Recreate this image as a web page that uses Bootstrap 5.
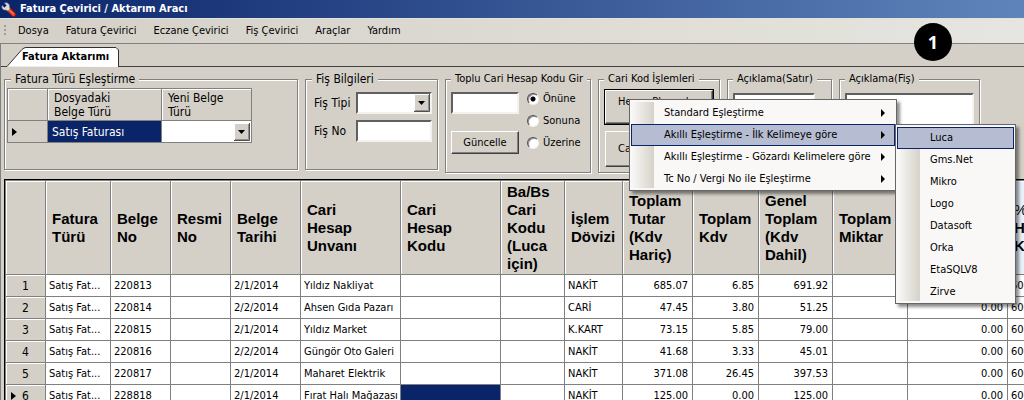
<!DOCTYPE html>
<html lang="tr">
<head>
<meta charset="utf-8">
<meta name="viewport" content="width=device-width, initial-scale=1">
<title>Fatura Çevirici / Aktarım Aracı</title>
<link href="https://cdn.jsdelivr.net/npm/bootstrap@5.3.0/dist/css/bootstrap.min.css" rel="stylesheet">
<style>
  :root { --face: #d4d0c8; --line: #808080; --navy: #0a246a; }
  body { background: var(--face); color: #000; font: 11px/14px "DejaVu Sans Condensed", "DejaVu Sans", sans-serif; }
  label, button, input, select, textarea { font: inherit; color: #000; }

  .titlebar { height: 18px; background: linear-gradient(90deg, var(--navy), #5f84bb); color: #fff; font-weight: 700; }
  .menubar { height: 25px; background: linear-gradient(90deg, #d4d0c8, #e6e5df); border-top: 1px solid #e4e1da; }
  .menubar a { color: #000; text-decoration: none; }
  .menu-links { gap: 17px; }
  .grip { width: 2px; height: 12px; background: repeating-linear-gradient(#a09d96 0 2px, transparent 2px 4px); }
  .workspace { border-top: 1px solid var(--line); border-left: 1px solid var(--line); }

  .tabstrip { height: 23px; }
  .tabstrip::before { content: ""; width: 6px; border-bottom: 1px solid #404040; }
  .tabstrip::after { content: ""; flex: 1; border-bottom: 1px solid #404040; }
  .page-tab { width: 112px; height: 20px; border: 0; background: none; padding: 0 0 0 15px; font-weight: 700; text-align: left; }
  .page-tab svg { position: absolute; inset: 0; z-index: -1; }

  .groups { gap: 7px; padding: 5px 0 6px 3px; }
  .group { border: 1px solid var(--line); box-shadow: 1px 1px 0 #fff, inset 1px 1px 0 #fff; }
  .group legend { float: none; width: auto; margin: 0 0 0 5px; padding: 0 4px; font-size: 11px; line-height: 14px; background: var(--face); white-space: nowrap; }
  .group legend.lg { margin-left: 6px; }
  .g-types { width: 294px; height: 98px; }
  .g-slip { width: 133px; height: 98px; }
  .g-bulk { width: 146px; height: 101px; }
  .g-code { width: 122px; height: 101px; }
  .g-line { width: 105px; height: 101px; }
  .g-note { width: 141px; height: 101px; }
  .lg { font-size: 12px !important; }

  .field { background: #fff; border: 2px solid; border-color: #606060 #f4f2ee #f4f2ee #606060; border-radius: 0; width: 100%; height: 22px; padding: 0 2px; display: block; resize: none; outline: 0; }
  .pick { appearance: none; border-radius: 0; background: #fff url("data:image/svg+xml,%3Csvg xmlns='http://www.w3.org/2000/svg' width='16' height='18'%3E%3Cpath fill='%23d4d0c8' d='M0 0h16v18H0z'/%3E%3Cpath fill='none' stroke='%23fff' d='M.5 17V.5H15'/%3E%3Cpath fill='none' stroke='%23505050' d='M15.5 0v17.5H0'/%3E%3Cpath fill='none' stroke='%23909090' d='M14.5 1v15.500H1'/%3E%3Cpath d='M4 7h7L7.500 11z'/%3E%3C/svg%3E") right center no-repeat; }
  .push { background: var(--face); border: 1px solid; border-color: #fff #404040 #404040 #fff; border-radius: 0; box-shadow: inset -1px -1px 0 #808080; padding: 0; white-space: nowrap; overflow: hidden; }
  .push-main { outline: 1px solid #000; }
  .dot { appearance: none; width: 12px; height: 12px; margin: 0; border-radius: 50%; background: #fff; border: 1px solid; border-color: #505050 #f4f2ee #f4f2ee #505050; box-shadow: inset 1px 1px 0 #909090; }
  .dot:checked { background: radial-gradient(circle, #000 2px, #fff 3px); }

  .match { width: 245px; margin: 2px; border-collapse: collapse; font-size: 12px; table-layout: fixed; }
  .match th, .match td { border: 1px solid var(--line); font-weight: 400; padding: 0; }
  .match th { height: 32px; padding: 0 6px; box-shadow: inset 1px 1px 0 #fff; white-space: nowrap; }
  .match td { height: 22px; }
  .match .pick { border: 1px solid #fff; height: 20px; width: 100%; display: block; }
  .chosen { background: var(--navy); color: #fff; }

  .popup { position: absolute; z-index: 5; background: #f9f8f7 linear-gradient(90deg, #f9f8f7, #d6d2c9) 2px 2px / 22px calc(100% - 4px) no-repeat; border: 1px solid #666; padding: 2px 1px 0; box-shadow: 3px 3px 3px rgba(0, 0, 0, .45); margin: 0; list-style: none; }
  .popup a { display: flex; align-items: center; height: 22px; padding: 0 9px 0 32px; border: 1px solid transparent; color: #000; text-decoration: none; white-space: nowrap; }
  .popup a.active { background: #b6bdd2; border-color: var(--navy); }
  .popup-main { left: 30px; top: 13px; width: 268px; }
  .popup-sub { left: 100%; top: 0; width: 121px; }
  .tri { margin-left: auto; border: solid transparent; border-width: 4px 0 4px 4px; border-left-color: #000; }

  .sheet { border-top: 1px solid #000; border-left: 1px solid #000; margin-left: 3px; }
  .invoices { width: 1101px; table-layout: fixed; border-collapse: separate; border-spacing: 0; border-top: 1px solid var(--line); border-left: 1px solid var(--line); }
  .invoices th, .invoices td { border-right: 1px solid var(--line); border-bottom: 1px solid var(--line); padding: 0 3px; white-space: nowrap; overflow: hidden; }
  .invoices thead th { height: 94px; padding: 0 0 0 6px; background: var(--face); box-shadow: inset 1px 1px 0 #fff; font: 700 15px/18px "Liberation Sans", Arial, sans-serif; vertical-align: middle; }
  .invoices tbody tr { height: 22px; }
  .invoices tbody td { background: #fff; }
  .invoices tbody th { background: var(--face); box-shadow: inset 1px 1px 0 #fff; font: 400 12px/14px "DejaVu Sans Condensed", sans-serif; text-align: center; position: relative; }
  .invoices td.chosen { background: var(--navy); }
  .invoices .num { text-align: right; padding-right: 4px; }
  .invoices thead th.hot { background: #e9f2fb; }
  .row-mark { display: inline-block; border: solid transparent; border-width: 4px 0 4px 5px; border-left-color: #000; }
  tbody th .row-mark { position: absolute; left: 5px; top: 7px; }

  .step { position: absolute; z-index: 9; top: 23px; right: 72px; width: 38px; height: 38px; border-radius: 50%; background: #000; color: #fff; font: 700 18px/38px "Open Sans", sans-serif; text-align: center; }
</style>
</head>
<body>
<div class="vh-100 overflow-hidden position-relative">
  <header class="titlebar d-flex align-items-center">
    <svg class="ms-0 me-1" width="16" height="17" viewBox="0 0 16 17" aria-hidden="true">
      <path d="M8.500 8 14 13.500" stroke="#7a1208" stroke-width="5" stroke-linecap="round"/>
      <path d="M8 8 13.500 13.500" stroke="#e8402a" stroke-width="3.500" stroke-linecap="round"/>
      <path d="M8 7.500 13.500 13" stroke="#ff9a80" stroke-width="1"/>
      <path d="M2 4.500 4.500 6.500 6.500 4.500 4.500 2C7 1 10 3 9.500 6L10 8 8 10 6 9C3 9.500 1.200 7 2 4.500Z" fill="#dcdcdc" stroke="#707070" stroke-width=".6"/>
    </svg>
    <span>Fatura Çevirici / Aktarım Aracı</span>
  </header>

  <nav class="menubar d-flex align-items-center">
    <span class="grip ms-1 me-2"></span>
    <div class="menu-links d-flex ms-1">
      <a href="#">Dosya</a><a href="#">Fatura Çevirici</a><a href="#">Eczane Çevirici</a><a href="#">Fiş Çevirici</a><a href="#">Araçlar</a><a href="#">Yardım</a>
    </div>
  </nav>

  <main class="workspace">
    <div class="tabstrip d-flex align-items-stretch">
      <button type="button" class="page-tab position-relative z-0 align-self-end">
        <svg width="112" height="20" viewBox="0 0 112 20" aria-hidden="true"><path d="M0 19.500 15 2.500Q17 .5 19 .5H109L111.500 3V20" fill="#fff" stroke="#303030"/></svg>Fatura Aktarımı</button>
    </div>

    <form class="groups d-flex align-items-start">
      <fieldset class="group g-types flex-shrink-0">
        <legend class="lg">Fatura Türü Eşleştirme</legend>
        <table class="match">
          <colgroup><col style="width:40px"><col style="width:114px"><col></colgroup>
          <thead><tr><th></th><th scope="col">Dosyadaki<br>Belge Türü</th><th scope="col">Yeni Belge<br>Türü</th></tr></thead>
          <tbody><tr><td class="ps-1"><span class="row-mark d-block"></span></td><td class="chosen ps-1">Satış Faturası</td>
            <td class="bg-white"><select class="pick" aria-label="Yeni Belge Türü"><option></option></select></td></tr></tbody>
        </table>
      </fieldset>

      <fieldset class="group g-slip flex-shrink-0">
        <legend class="lg">Fiş Bilgileri</legend>
        <div class="d-grid align-items-center lg" style="grid-template-columns:42px 76px;gap:6px 0;padding:6px 0 0 8px">
          <label for="tip">Fiş Tipi</label><select id="tip" class="field pick"><option></option></select>
          <label for="no">Fiş No</label><input id="no" class="field">
        </div>
      </fieldset>

      <fieldset class="group g-bulk flex-shrink-0">
        <legend>Toplu Cari Hesap Kodu Gir</legend>
        <div class="d-flex gap-2" style="padding:6px 0 0 5px">
          <div class="d-flex flex-column justify-content-between" style="width:68px;height:62px">
            <input class="field" aria-label="Cari hesap kodu">
            <button type="button" class="push" style="height:23px">Güncelle</button>
          </div>
          <div class="d-flex flex-column">
            <label class="d-flex align-items-center gap-1 mb-1"><input type="radio" name="yer" class="dot" checked>Önüne</label>
            <label class="d-flex align-items-center gap-1 mb-2 mt-1"><input type="radio" name="yer" class="dot">Sonuna</label>
            <label class="d-flex align-items-center gap-1"><input type="radio" name="yer" class="dot">Üzerine</label>
          </div>
        </div>
      </fieldset>

      <fieldset class="group g-code flex-shrink-0 position-relative">
        <legend>Cari Kod İşlemleri</legend>
        <div class="d-grid" style="gap:7px;padding:4px 6px 0 6px">
          <button type="button" class="push push-main text-start" style="height:34px;padding:0 0 10px 12px">Hesap Planından</button>
          <button type="button" class="push text-start" style="height:36px;padding-left:12px">Cari Kart</button>
        </div>
        <ul class="popup popup-main">
          <li><a href="#">Standard Eşleştirme<i class="tri"></i></a></li>
          <li class="position-relative"><a href="#" class="active">Akıllı Eşleştirme - İlk Kelimeye göre<i class="tri"></i></a>
            <ul class="popup popup-sub">
              <li><a href="#" class="active">Luca</a></li>
              <li><a href="#">Gms.Net</a></li>
              <li><a href="#">Mikro</a></li>
              <li><a href="#">Logo</a></li>
              <li><a href="#">Datasoft</a></li>
              <li><a href="#">Orka</a></li>
              <li><a href="#">EtaSQLV8</a></li>
              <li><a href="#">Zirve</a></li>
            </ul>
          </li>
          <li><a href="#">Akıllı Eşleştirme - Gözardı Kelimelere göre<i class="tri"></i></a></li>
          <li><a href="#">Tc No / Vergi No ile Eşleştirme<i class="tri"></i></a></li>
        </ul>
      </fieldset>

      <fieldset class="group g-line flex-shrink-0">
        <legend>Açıklama(Satır)</legend>
        <div style="padding:7px 16px 0 5px"><textarea class="field" style="height:60px" aria-label="Açıklama (Satır)"></textarea></div>
      </fieldset>

      <fieldset class="group g-note flex-shrink-0">
        <legend>Açıklama(Fiş)</legend>
        <div style="padding:7px 5px 0 5px"><textarea class="field" style="height:60px" aria-label="Açıklama (Fiş)"></textarea></div>
      </fieldset>
    </form>

    <div class="sheet overflow-hidden">
      <table class="invoices">
        <colgroup><col style="width:40px"><col style="width:65px"><col style="width:60px"><col style="width:60px"><col style="width:70px"><col style="width:100px"><col style="width:100px"><col style="width:64px"><col style="width:58px"><col style="width:70px"><col style="width:66px"><col style="width:74px"><col style="width:75px"><col style="width:100px"><col></colgroup>
        <thead><tr><th></th><th scope="col">Fatura<br>Türü</th><th scope="col">Belge<br>No</th><th scope="col">Resmi<br>No</th><th scope="col">Belge<br>Tarihi</th><th scope="col">Cari<br>Hesap<br>Unvanı</th><th scope="col">Cari<br>Hesap<br>Kodu</th><th scope="col">Ba/Bs<br>Cari<br>Kodu<br>(Luca<br>için)</th><th scope="col">İşlem<br>Dövizi</th><th scope="col">Toplam<br>Tutar<br>(Kdv<br>Hariç)</th><th scope="col">Toplam<br>Kdv</th><th scope="col">Genel<br>Toplam<br>(Kdv<br>Dahil)</th><th scope="col">Toplam<br>Miktar</th><th></th><th scope="col" class="hot"><span class="fw-normal">%1</span><br>Hesap<br>Kodu</th></tr></thead>
        <tbody>
          <tr><th scope="row">1</th><td>Satış Fat...</td><td>220813</td><td></td><td>2/1/2014</td><td>Yıldız Nakliyat</td><td></td><td></td><td>NAKİT</td><td class="num">685.07</td><td class="num">6.85</td><td class="num">691.92</td><td></td><td class="num">0.00</td><td>600</td></tr>
          <tr><th scope="row">2</th><td>Satış Fat...</td><td>220814</td><td></td><td>2/2/2014</td><td>Ahsen Gıda Pazarı</td><td></td><td></td><td>CARİ</td><td class="num">47.45</td><td class="num">3.80</td><td class="num">51.25</td><td></td><td class="num">0.00</td><td>600</td></tr>
          <tr><th scope="row">3</th><td>Satış Fat...</td><td>220815</td><td></td><td>2/1/2014</td><td>Yıldız Market</td><td></td><td></td><td>K.KART</td><td class="num">73.15</td><td class="num">5.85</td><td class="num">79.00</td><td></td><td class="num">0.00</td><td>600</td></tr>
          <tr><th scope="row">4</th><td>Satış Fat...</td><td>220816</td><td></td><td>2/2/2014</td><td>Güngör Oto Galeri</td><td></td><td></td><td>NAKİT</td><td class="num">41.68</td><td class="num">3.33</td><td class="num">45.01</td><td></td><td class="num">0.00</td><td>600</td></tr>
          <tr><th scope="row">5</th><td>Satış Fat...</td><td>220817</td><td></td><td>2/1/2014</td><td>Maharet Elektrik</td><td></td><td></td><td>NAKİT</td><td class="num">371.08</td><td class="num">26.45</td><td class="num">397.53</td><td></td><td class="num">0.00</td><td>600</td></tr>
          <tr><th scope="row"><span class="row-mark"></span>6</th><td>Satış Fat...</td><td>228818</td><td></td><td>2/1/2014</td><td>Fırat Halı Mağazası</td><td class="chosen"></td><td></td><td>NAKİT</td><td class="num">125.00</td><td class="num">0.00</td><td class="num">125.00</td><td></td><td class="num">0.00</td><td>600</td></tr>
        </tbody>
      </table>
    </div>
  </main>
  <div class="step">1</div>
</div>
<script src="https://cdn.jsdelivr.net/npm/bootstrap@5.3.0/dist/js/bootstrap.bundle.min.js"></script>
</body>
</html>
